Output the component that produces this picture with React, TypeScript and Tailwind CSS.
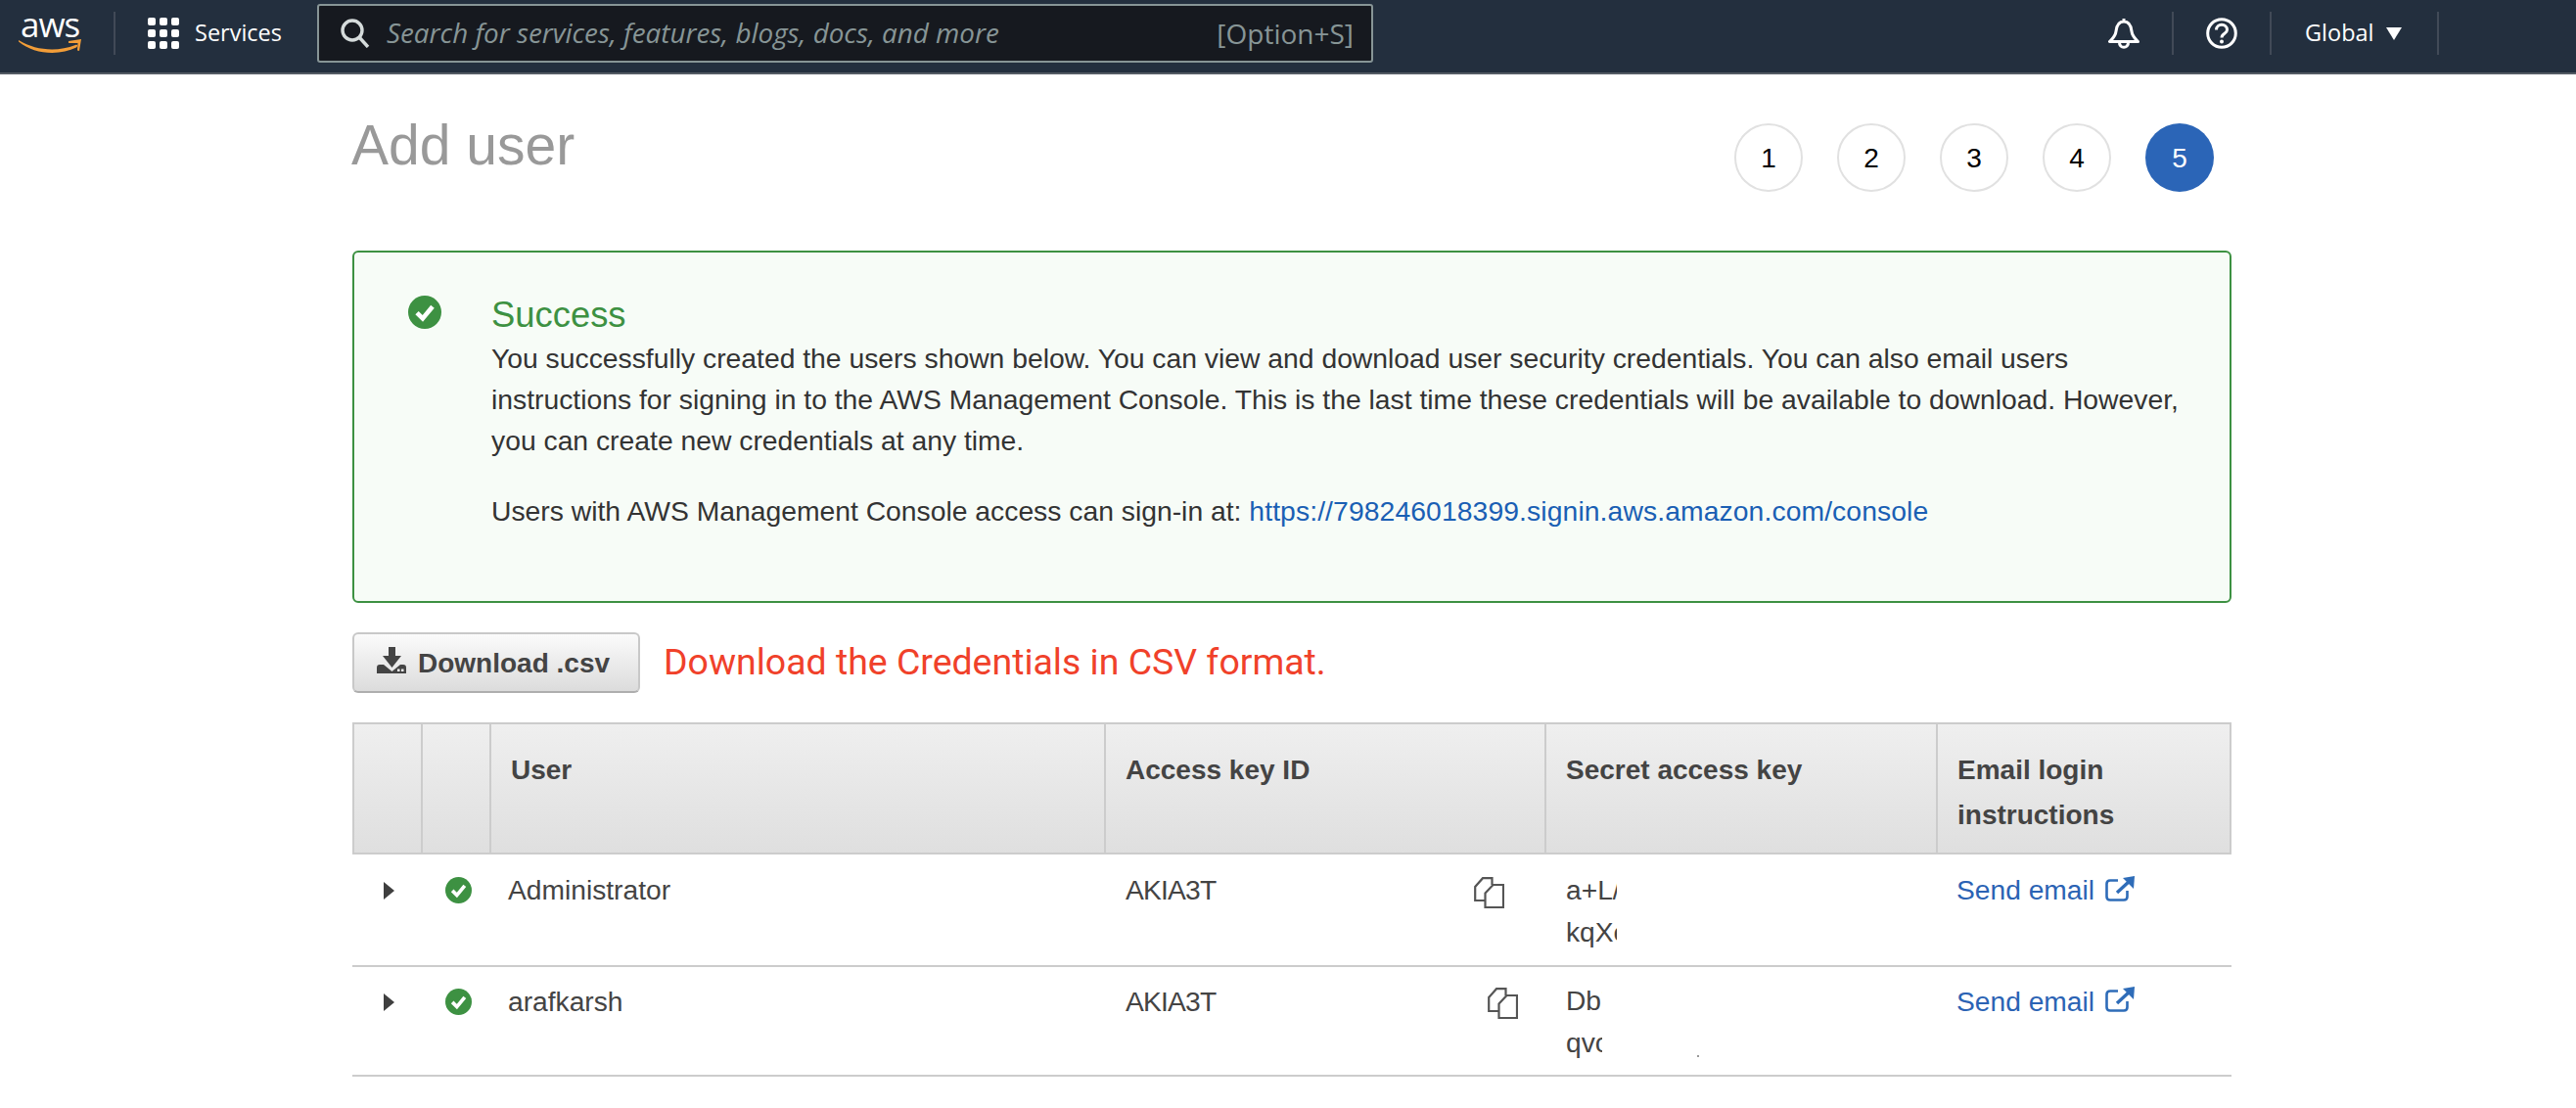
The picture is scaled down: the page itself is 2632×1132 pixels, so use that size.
import React from "react";

const Check = ({ size }: { size: number }) => (
  <svg width={size} height={size} viewBox="0 0 32 32" className="shrink-0">
    <circle cx="16" cy="16" r="16" fill="#3d9142" />
    <path d="M8.5 16.5 L14 22 L23.5 10.5" fill="none" stroke="#fff" strokeWidth="4.4" />
  </svg>
);

const Copy = () => (
  <svg width="31" height="32" viewBox="0 0 31 32" fill="none" stroke="#555" strokeWidth="2.2" className="shrink-0">
    <path d="M11 24 H1.2 V10 L9 1.2 H18.5 V8" />
    <path d="M11.5 16.5 L19.5 8 H30 V31 H11.5 Z" />
  </svg>
);

const External = () => (
  <svg width="30" height="26" viewBox="0 0 30 26" fill="none" className="shrink-0 ml-[11px]">
    <path d="M13 4.5 H5 Q1.5 4.5 1.5 8 V21 Q1.5 24.5 5 24.5 H19 Q22.5 24.5 22.5 21 V15" stroke="#2e6cb8" strokeWidth="2.6" />
    <path d="M12 17 L25 5" stroke="#2e6cb8" strokeWidth="3.4" />
    <path d="M18 2 L30 0 L29 13 Z" fill="#2e6cb8" />
  </svg>
);

const Arrow = () => (
  <svg width="11" height="18" viewBox="0 0 11 18" className="shrink-0">
    <path d="M0 0 L11 9 L0 18 Z" fill="#3f3f3f" />
  </svg>
);

const Divider = () => <div className="w-[2px] h-[44px] bg-[#414a57] shrink-0" />;

const rows = [
  { user: "Administrator", a: "a+L/", b: "kqXe", clip: "w-[52px]", copy: "mr-[42px] mt-[9px]", text: "pt-[14px]", sec: "pt-[15px]", mail: "pt-[14px]", ext: "mt-[8px]", icon: "pt-[23px]", arrow: "pt-[28px]", h: "h-[115px]" },
  { user: "arafkarsh", a: "Db7", b: "qvc", clip: "w-[37px]", copy: "mr-[28px] mt-[8px]", text: "pt-[13px]", sec: "pt-[13px]", mail: "pt-[13px]", ext: "mt-[7px]", icon: "pt-[22px]", arrow: "pt-[27px]", h: "h-[112px]" },
];

const headCell = "border-l-2 border-[#cccccc] px-5 pt-[24px] leading-[46px]";
const rowCols = "grid grid-cols-[71px_70px_628px_450px_400px_301px]";
const headCols = "grid grid-cols-[68px_70px_628px_450px_400px_300px]";

export default function App() {
  return (
    <div className="w-[2632px] h-[1132px] bg-white overflow-hidden font-['Liberation_Sans',Arial,sans-serif]">
      <header className="h-[76px] pb-[6px] bg-[#232f3e] border-b-2 border-[#545b64] flex items-center font-['Open_Sans','Noto_Sans',sans-serif] text-white">
        <div className="relative w-[116px] h-[68px] shrink-0 pl-[21px]">
          <span className="block text-[35px] leading-[40px] pt-[5px] tracking-[-1px]">aws</span>
          <svg width="65" height="16" viewBox="0 0 65 16" className="absolute left-[19px] top-[39px]">
            <path d="M0 2 C18 13 40 14 58 7 C60 6 61 8 59 9.5 C42 18 16 17 0 3.5 Z" fill="#f29d38" />
            <path d="M51 3 L64 1 L62 13 L60 12.5 L60.5 5 L51 5 Z" fill="#f29d38" />
          </svg>
        </div>
        <Divider />
        <div className="ml-[33px] grid grid-cols-3 gap-[4px] w-[32px] shrink-0">
          {Array.from({ length: 9 }).map((_, i) => (
            <div key={i} className="h-[8px] w-[8px] bg-white rounded-[2px]" />
          ))}
        </div>
        <span className="ml-[16px] text-[23.5px] font-medium w-[125px] shrink-0">Services</span>
        <div className="w-[1079px] h-[60px] bg-[#16191f] border-2 border-[#879596] rounded-[3px] flex items-center pl-[22px] pr-[18px] shrink-0">
          <svg width="30" height="30" viewBox="0 0 30 30" fill="none" stroke="#d5dbdb" strokeWidth="3.4" className="shrink-0">
            <circle cx="12" cy="12" r="10" />
            <path d="M19 19 L28 29" />
          </svg>
          <span className="ml-[17px] italic text-[27.8px] text-[#879596] flex-1">Search for services, features, blogs, docs, and more</span>
          <span className="text-[28px] text-[#879596]">[Option+S]</span>
        </div>
        <svg width="32" height="32" viewBox="0 0 32 32" fill="none" stroke="#fff" strokeWidth="3" className="ml-[751px] shrink-0">
          <path d="M16 1 V4 M16 4 C10 4 8.5 9 8 14 C7.5 19 5 21 1.5 24.5 H30.5 C27 21 24.5 19 24 14 C23.5 9 22 4 16 4 Z" strokeLinejoin="round" />
          <path d="M11.5 25 C11 32 21 32 20.5 25" />
        </svg>
        <div className="ml-[33px]"><Divider /></div>
        <svg width="32" height="32" viewBox="0 0 32 32" fill="none" className="ml-[33px] shrink-0">
          <circle cx="16" cy="16" r="14.3" stroke="#fff" strokeWidth="3" />
          <path d="M10.5 12.5 C10.5 5.5 21.5 5.5 21.5 12.5 C21.5 16.5 16 16 16 20.5" stroke="#fff" strokeWidth="3" />
          <circle cx="16" cy="24.5" r="2" fill="#fff" />
        </svg>
        <div className="ml-[33px]"><Divider /></div>
        <span className="ml-[34px] text-[23.5px] font-medium">Global</span>
        <svg width="16" height="13" viewBox="0 0 16 13" className="ml-[12px] shrink-0"><path d="M0 0 H16 L8 13 Z" fill="#fff" /></svg>
        <div className="ml-[36px]"><Divider /></div>
      </header>

      <main className="ml-[360px] w-[1920px]">
        <div className="flex justify-between items-start h-[180px] relative">
          <h1 className="text-[57px] text-[#999999] leading-[64px] mt-[40px] -ml-px">Add user</h1>
          <ol className="flex gap-[35px] mt-[50px] mr-[18px]">
            {[1, 2, 3, 4, 5].map((n) => (
              <li
                key={n}
                className={
                  n === 5
                    ? "w-[70px] h-[70px] pt-[2px] rounded-full bg-[#2b65b7] text-white text-[28px] flex items-center justify-center"
                    : "w-[70px] h-[70px] pt-[2px] rounded-full bg-white border-2 border-[#e1e1e1] text-black text-[28px] flex items-center justify-center"
                }
              >
                {n}
              </li>
            ))}
          </ol>
        </div>

        <section className="h-[360px] border-2 border-[#3d9142] rounded-[6px] bg-[#f7fcf7] flex">
          <div className="w-[140px] pl-[55px] pt-[44px] shrink-0">
            <Check size={34} />
          </div>
          <div className="text-[28.3px] leading-[42px] text-[#333333] pt-[42px] pr-[40px]">
            <h2 className="text-[36.4px] leading-[44px] text-[#3d9142]">Success</h2>
            <p className="mt-[1px]">
              You successfully created the users shown below. You can view and download user security credentials. You can also email users instructions for signing in to the AWS Management Console. This is the last time these credentials will be available to download. However, you can create new credentials at any time.
            </p>
            <p className="mt-[30px]">
              Users with AWS Management Console access can sign-in at:{" "}
              <span className="text-[#1a5fb4] tracking-[0.1px]">https://798246018399.signin.aws.amazon.com/console</span>
            </p>
          </div>
        </section>

        <div className="flex items-center mt-[30px] h-[62px]">
          <button className="w-[294px] h-[62px] border-2 border-[#c8c8c8] border-b-[#aeaeae] rounded-[6px] bg-gradient-to-b from-[#fbfbfb] to-[#dcdcdc] flex items-center pl-[23px] text-[28px] font-bold text-[#444444]">
            <svg width="30" height="27" viewBox="0 0 30 27" className="shrink-0 mb-[6px]">
              <path d="M12 0 H19 V9 H25 L15.5 21 L6 9 H12 Z" fill="#444" />
              <path d="M0 27 V21 Q0 18 3 18 H7 L15.5 25 L24 18 H27 Q30 18 30 21 V27 Z" fill="#444" />
              <rect x="21" y="22.5" width="2.5" height="2.5" fill="#eee" />
              <rect x="25" y="22.5" width="2.5" height="2.5" fill="#eee" />
            </svg>
            <span className="ml-[12px] mt-[2px]">Download .csv</span>
          </button>
          <span className="ml-[24px] mb-[2px] text-[37.45px] text-[#f0412a] font-['Roboto',sans-serif]">Download the Credentials in CSV format.</span>
        </div>

        <div className="mt-[30px] text-[28.2px] text-[#444444]">
          <div className={`${headCols} h-[135px] border-2 border-[#cccccc] bg-gradient-to-b from-[#efefef] to-[#dfdfdf] font-bold text-[28px] box-border`}>
            <div />
            <div className={headCell} />
            <div className={headCell}>User</div>
            <div className={headCell}>Access key ID</div>
            <div className={headCell}>Secret access key</div>
            <div className={headCell}>Email login instructions</div>
          </div>
          {rows.map((r, i) => (
            <div key={r.user} className={`${rowCols} ${r.h} border-b-2 border-[#cccccc] relative`}>
              <div className={`pl-[32px] ${r.arrow}`}><Arrow /></div>
              <div className={`pl-[24px] ${r.icon}`}><Check size={27} /></div>
              <div className={`pl-[18px] ${r.text} leading-[44px]`}>{r.user}</div>
              <div className={`pl-[21px] ${r.text} leading-[44px] flex justify-between items-start`}>
                <span className="tracking-[-0.8px]">AKIA3T</span>
                <div className={r.copy}><Copy /></div>
              </div>
              <div className={`ml-[21px] ${r.sec} leading-[43px] overflow-hidden ${r.clip}`}>
                <div>{r.a}</div>
                <div>{r.b}</div>
              </div>
              <div className={`pl-[20px] ${r.mail} leading-[44px] text-[#2b63b4] flex items-start`}>
                <span>Send email</span>
                <span className={r.ext}><External /></span>
              </div>
              {i === 1 && <div className="absolute left-[1374px] top-[90px] w-[2px] h-[2px] bg-[#999999]" />}
            </div>
          ))}
        </div>
      </main>
    </div>
  );
}
